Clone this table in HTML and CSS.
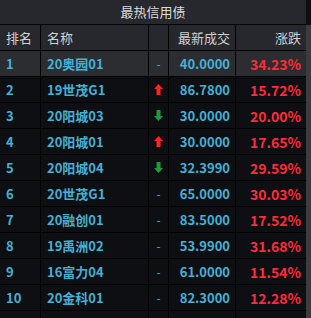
FILE: index.html
```html
<!DOCTYPE html>
<html><head><meta charset="utf-8"><link rel="stylesheet" href="styles.css"></head>
<body>
<div class="panel">
  <div class="main">
    <div class="title">最热信用债</div>
    <div class="row head">
      <div class="c rank">排名</div><div class="c name">名称</div><div class="c arrow"></div><div class="c price">最新成交</div><div class="c chg">涨跌</div>
    </div>
    <div class="row sel"><div class="c rank">1</div><div class="c name">20奥园01</div><div class="c arrow"><span class="dash">-</span></div><div class="c price">40.0000</div><div class="c chg">34.23%</div></div>
    <div class="row"><div class="c rank">2</div><div class="c name">19世茂G1</div><div class="c arrow"><svg class="up" width="9" height="11" viewBox="0 0 9 11"><path d="M4.5 0L9 5H6.5V11H2.5V5H0Z"/></svg></div><div class="c price">86.7800</div><div class="c chg">15.72%</div></div>
    <div class="row"><div class="c rank">3</div><div class="c name">20阳城03</div><div class="c arrow"><svg class="down" width="9" height="11" viewBox="0 0 9 11"><path d="M4.5 11L9 6H6.5V0H2.5V6H0Z"/></svg></div><div class="c price">30.0000</div><div class="c chg">20.00%</div></div>
    <div class="row"><div class="c rank">4</div><div class="c name">20阳城01</div><div class="c arrow"><svg class="up" width="9" height="11" viewBox="0 0 9 11"><path d="M4.5 0L9 5H6.5V11H2.5V5H0Z"/></svg></div><div class="c price">30.0000</div><div class="c chg">17.65%</div></div>
    <div class="row"><div class="c rank">5</div><div class="c name">20阳城04</div><div class="c arrow"><svg class="down" width="9" height="11" viewBox="0 0 9 11"><path d="M4.5 11L9 6H6.5V0H2.5V6H0Z"/></svg></div><div class="c price">32.3990</div><div class="c chg">29.59%</div></div>
    <div class="row"><div class="c rank">6</div><div class="c name">20世茂G1</div><div class="c arrow"><span class="dash">-</span></div><div class="c price">65.0000</div><div class="c chg">30.03%</div></div>
    <div class="row"><div class="c rank">7</div><div class="c name">20融创01</div><div class="c arrow"><span class="dash">-</span></div><div class="c price">83.5000</div><div class="c chg">17.52%</div></div>
    <div class="row"><div class="c rank">8</div><div class="c name">19禹洲02</div><div class="c arrow"><span class="dash">-</span></div><div class="c price">53.9900</div><div class="c chg">31.68%</div></div>
    <div class="row"><div class="c rank">9</div><div class="c name">16富力04</div><div class="c arrow"><span class="dash">-</span></div><div class="c price">61.0000</div><div class="c chg">11.54%</div></div>
    <div class="row"><div class="c rank">10</div><div class="c name">20金科01</div><div class="c arrow"><span class="dash">-</span></div><div class="c price">82.3000</div><div class="c chg">12.28%</div></div>
    <div class="row"><div class="c rank"></div><div class="c name"></div><div class="c arrow"></div><div class="c price"></div><div class="c chg"></div></div>
  </div>
  <div class="scroll"></div>
</div>
</body></html>
```
FILE: styles.css
```css
html, body { margin: 0; padding: 0; background: #0d0f13; }
body { width: 311px; height: 318px; overflow: hidden; font-family: "Noto Sans CJK SC", "Noto Sans", sans-serif; }
.panel { display: flex; width: 311px; height: 318px; overflow: hidden; background: #0d0f13; }
.main { width: 306px; display: flex; flex-direction: column; }
.scroll { width: 5px; background: #3b3c40; margin-top: 25px; }
.title { height: 24px; line-height: 24px; text-align: center; color: #dcdcdc; font-size: 13px; background: #26282d; border-bottom: 1px solid #050608; flex-shrink: 0; }
.row { display: flex; height: 25px; border-bottom: 1px solid #000; flex-shrink: 0; }
.row.head { height: 25px; background: #26282d; color: #d2d2d2; font-size: 13px; border-bottom: 1px solid #000; }
.row.sel { background: #2c2d31; }
.c { display: flex; align-items: center; border-right: 1px solid #000; font-size: 13px; }
.rank { width: 34px; padding-left: 6px; }
.name { width: 101px; padding-left: 6px; }
.arrow { width: 19px; justify-content: center; }
.price { width: 61px; justify-content: flex-end; padding-right: 5px; }
.chg { flex: 1; justify-content: flex-end; padding-right: 5px; border-right: none; }
.row:not(.head) .rank, .row:not(.head) .name, .row:not(.head) .price { color: #45b1d6; font-weight: 700; }
.row:not(.head) .chg { color: #ff2a3a; font-weight: 700; font-size: 14px; }
.dash { color: #45b1d6; font-size: 12px; }
.up { fill: #ff2222; }
.down { fill: #1d9a3c; }
```
